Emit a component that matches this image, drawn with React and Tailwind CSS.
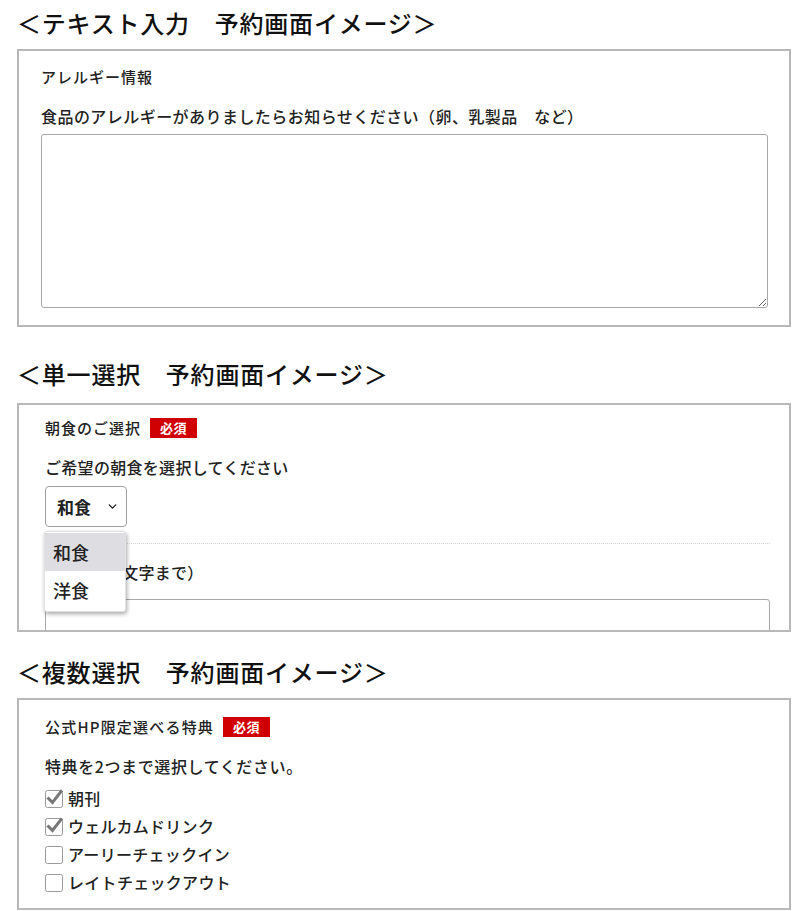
import React from 'react';
import { ChevronDown } from 'lucide-react';

const font = { fontFamily: '"Noto Sans CJK JP", "Noto Sans", sans-serif' };

function Title({ children, className = '' }) {
    return (
        <h2 className={`ml-[17px] h-[36px] leading-[36px] text-[24px] font-medium tracking-[0.8px] text-[#111] ${className}`}>
            {children}
        </h2>
    );
}

function Badge() {
    return (
        <span className="ml-[9px] inline-flex h-[20px] w-[47px] items-center justify-center bg-[#d00000] text-[13px] font-bold tracking-[0.5px] text-white">
            必須
        </span>
    );
}

function Check({ checked }) {
    return (
        <svg width="19" height="19" viewBox="0 0 19 19" className="shrink-0">
            <rect x="0.5" y="1.5" width="17" height="17" rx="2" fill="#fff" stroke="#9a9a9a" />
            {checked && (
                <path d="M3.5 9.5 L7.5 13.5 L16 2.5" fill="none" stroke="#777" strokeWidth="3" strokeLinecap="square" />
            )}
        </svg>
    );
}

export default function App() {
    const perks = [
        { label: '朝刊', checked: true },
        { label: 'ウェルカムドリンク', checked: true },
        { label: 'アーリーチェックイン', checked: false },
        { label: 'レイトチェックアウト', checked: false },
    ];

    return (
        <div className="w-[792px] h-[911px] overflow-hidden bg-white pt-[5px] text-[#222]" style={font}>
            {/* テキスト入力 */}
            <Title>＜テキスト入力　予約画面イメージ＞</Title>
            <div className="ml-[17px] mt-[8px] h-[278px] w-[774px] border-2 border-[#b8b8b8] pl-[22px] pr-[21px] pt-[16px]">
                <p className="h-[20px] leading-[20px] text-[15px] font-medium tracking-[1px]">アレルギー情報</p>
                <p className="mt-[17px] h-[24px] leading-[24px] text-[16px] font-medium tracking-[0.45px]">
                    食品のアレルギーがありましたらお知らせください（卵、乳製品　など）
                </p>
                <textarea className="mt-[6px] block h-[174px] w-[727px] rounded-[3px] border border-[#a8a8a8] bg-white outline-none" />
            </div>

            {/* 単一選択 */}
            <Title className="mt-[29px]">＜単一選択　予約画面イメージ＞</Title>
            <div className="ml-[17px] mt-[11px] h-[229px] w-[774px] overflow-hidden border-2 border-[#b8b8b8] pl-[26px] pr-[19px] pt-[13px]">
                <div className="flex h-[20px] items-center">
                    <span className="leading-[20px] text-[15px] font-medium tracking-[1px]">朝食のご選択</span>
                    <Badge />
                </div>
                <p className="mt-[17px] h-[24px] leading-[24px] text-[16px] font-medium tracking-[0.3px]">ご希望の朝食を選択してください</p>
                <div className="relative mt-[7px] w-[82px]">
                    <div className="flex h-[41px] w-[82px] items-center justify-between rounded-[4px] border border-[#a0a0a0] pl-[11px] pr-[7px]">
                        <span className="text-[17px] font-bold">和食</span>
                        <ChevronDown size={13} strokeWidth={2.6} className="text-[#222]" />
                    </div>
                    {/* open dropdown */}
                    <div className="absolute left-[-1px] top-[45px] z-10 w-[82px] rounded-[3px] border border-[#e2e2e2] bg-white py-[1px] shadow-[1px_2px_4px_rgba(0,0,0,0.35)]">
                        <div className="flex h-[38px] items-center bg-[#dddde2] pl-[8px] text-[18px] font-medium">和食</div>
                        <div className="flex h-[39px] items-center pl-[8px] text-[18px] font-medium">洋食</div>
                    </div>
                </div>
                <div className="mt-[16px] border-t border-dotted border-[#d4d4d4]" />
                <p className="mt-[16px] h-[24px] leading-[24px] text-[16px] font-medium tracking-[0.3px]">備考（100文字まで）</p>
                <div className="mt-[15px] h-[60px] w-[725px] rounded-t-[3px] border border-[#a8a8a8]" />
            </div>

            {/* 複数選択 */}
            <Title className="mt-[22px]">＜複数選択　予約画面イメージ＞</Title>
            <div className="ml-[17px] mt-[8px] h-[212px] w-[774px] border-2 border-[#b8b8b8] pl-[26px] pt-[17px]">
                <div className="flex h-[20px] items-center">
                    <span className="leading-[20px] text-[15px] font-medium tracking-[1.2px]">公式HP限定選べる特典</span>
                    <Badge />
                </div>
                <p className="mt-[17px] h-[24px] leading-[24px] text-[16px] font-medium tracking-[0.6px]">特典を2つまで選択してください。</p>
                <ul className="mt-[6px]">
                    {perks.map((p) => (
                        <li key={p.label} className="flex h-[28px] items-center gap-[4px]">
                            <Check checked={p.checked} />
                            <span className="text-[16px] font-medium tracking-[0.3px]">{p.label}</span>
                        </li>
                    ))}
                </ul>
            </div>
        </div>
    );
}
